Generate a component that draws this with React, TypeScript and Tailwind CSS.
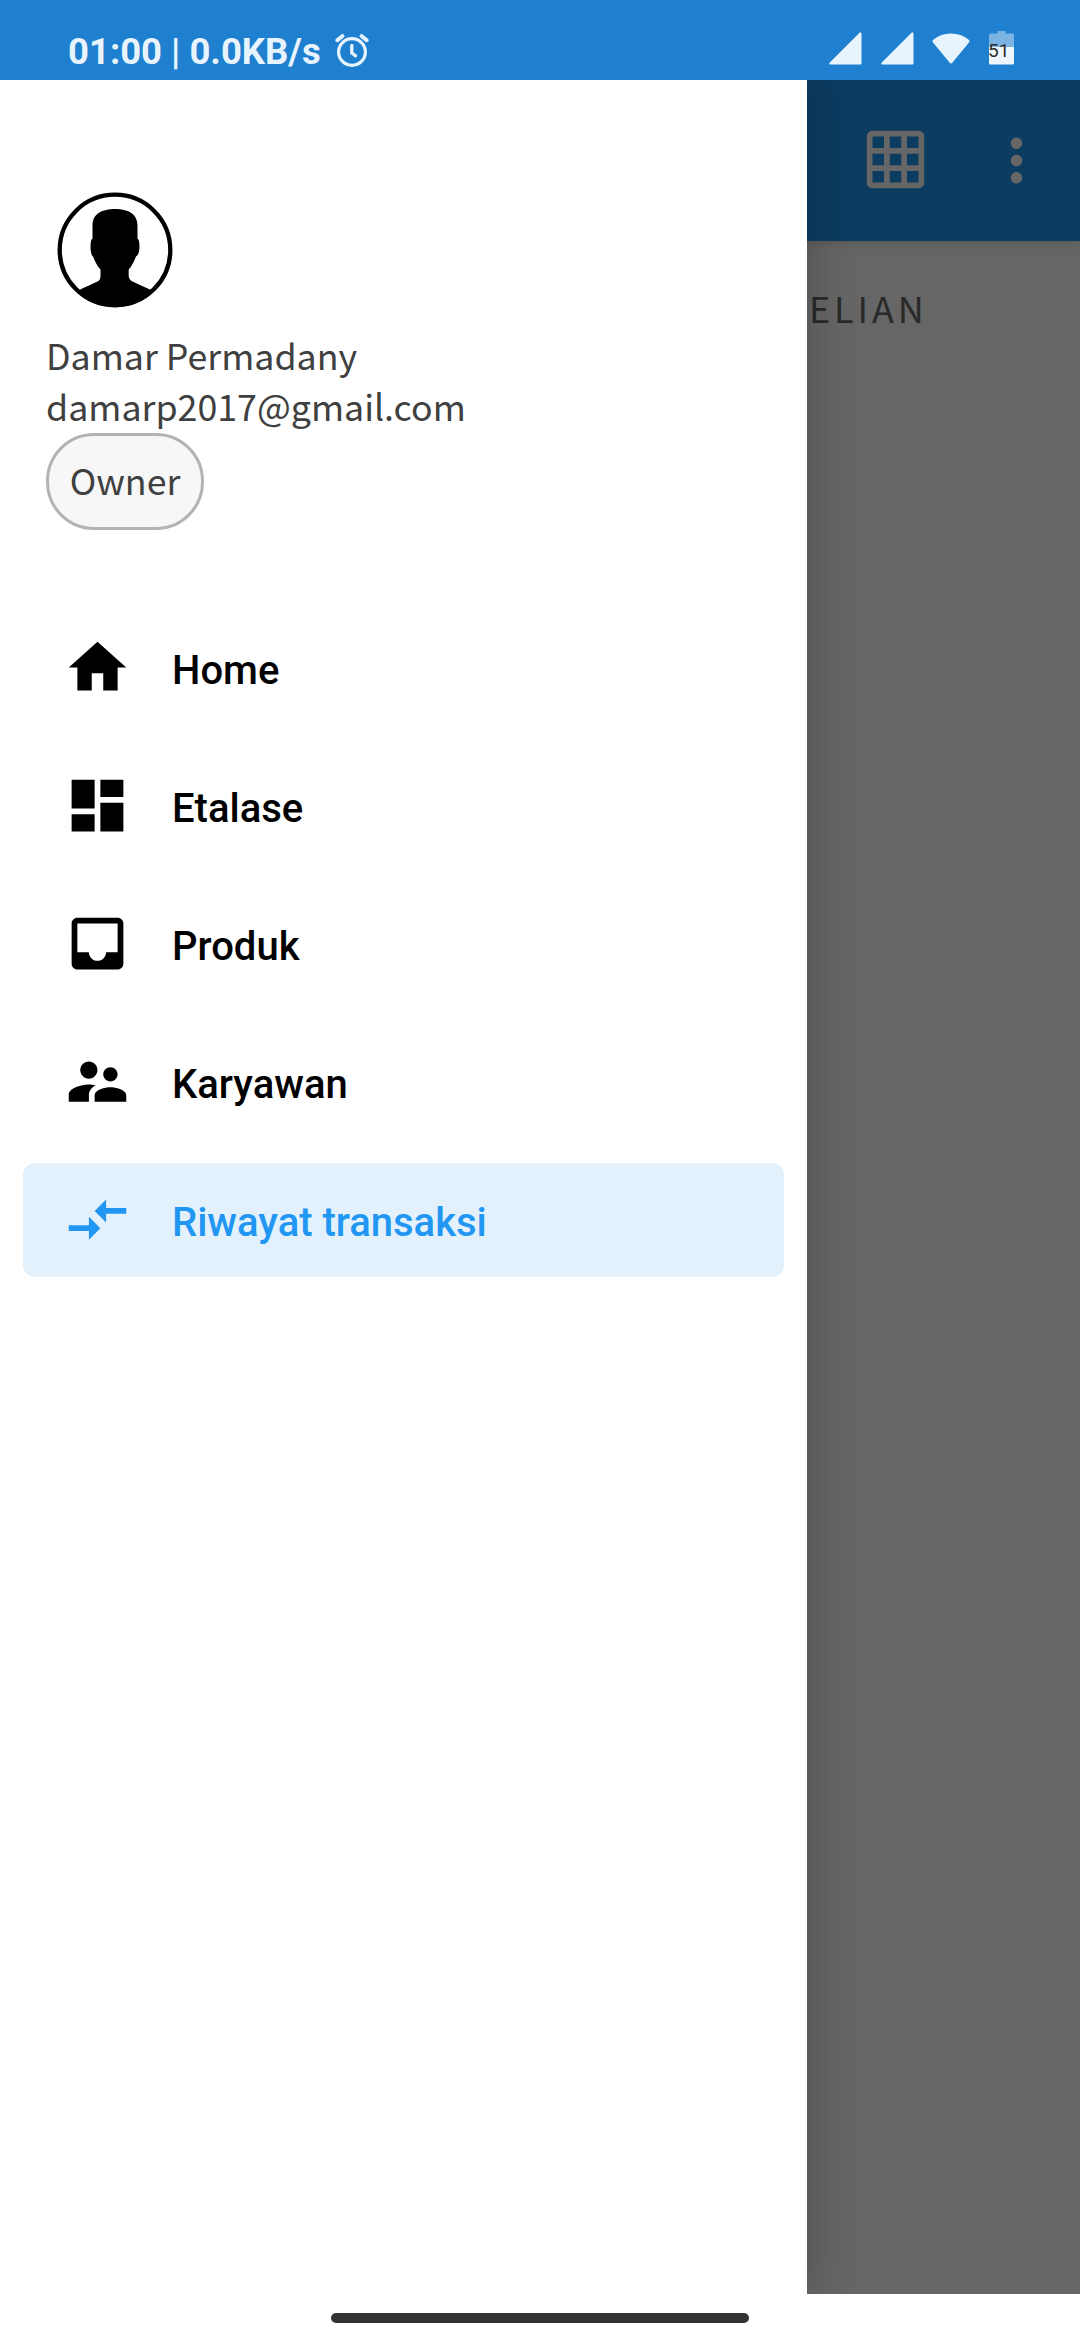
import type { ReactNode } from 'react';

type IconProps = { className?: string; children: ReactNode };

function Icon({ className = '', children }: IconProps) {
  return (
    <svg viewBox="0 0 24 24" fill="currentColor" className={`size-[69px] shrink-0 ${className}`}>
      {children}
    </svg>
  );
}

const menu = [
  { label: 'Home', icon: <path d="M10 20v-6h4v6h5v-8h3L12 3 2 12h3v8z" /> },
  { label: 'Etalase', icon: <path d="M3 13h8V3H3v10zm0 8h8v-6H3v6zm10 0h8V11h-8v10zm0-18v6h8V3h-8z" /> },
  {
    label: 'Produk',
    icon: (
      <path d="M19 3H4.99c-1.11 0-1.98.89-1.98 2L3 19c0 1.1.88 2 1.99 2H19c1.1 0 2-.9 2-2V5c0-1.11-.9-2-2-2zm0 12h-4c0 1.66-1.35 3-3 3s-3-1.34-3-3H4.99V5H19v10z" />
    ),
  },
  {
    label: 'Karyawan',
    icon: (
      <path d="M16.5 12c1.38 0 2.49-1.12 2.49-2.5S17.88 7 16.5 7 14 8.12 14 9.5s1.12 2.5 2.5 2.5zM9 11c1.66 0 2.99-1.34 2.99-3S10.66 5 9 5 6 6.34 6 8s1.34 3 3 3zm7.5 3c-1.83 0-5.5.92-5.5 2.75V19h11v-2.25c0-1.83-3.67-2.75-5.5-2.75zM9 13c-2.33 0-7 1.17-7 3.5V19h7v-2.25c0-.85.33-2.34 2.37-3.47C10.5 13.1 9.66 13 9 13z" />
    ),
  },
  {
    label: 'Riwayat transaksi',
    active: true,
    icon: <path d="M9.01 14H2v2h7.01v3L13 15l-3.99-4v3zm5.98-1v-3H22V8h-7.01V5L11 9l3.99 4z" />,
  },
];

function Signal() {
  return (
    <svg viewBox="0 0 33 33" fill="currentColor" className="h-[33px] w-[33px]">
      <path d="M30.8.4Q32.5 0 32.5 2V31.5Q32.5 32.5 31.5 32.5H1.5Q-.6 32.3.8 30.5Z" />
    </svg>
  );
}

function StatusBar() {
  return (
    <header className="flex h-20 items-start justify-between bg-[#1f80d0] pr-[66px] pl-[68px] text-[#e8f4fd]">
      <div className="flex items-start pt-[30px]">
        <span className="w-[254px] pt-px font-[Roboto,sans-serif] text-[36.5px] leading-[42px] font-bold whitespace-nowrap">
          01:00 | 0.0KB/s
        </span>
        <svg viewBox="0 0 34 34" fill="none" stroke="currentColor" className="mt-[3px] ml-[13px] size-[34px]">
          <circle cx="17" cy="19" r="13.4" strokeWidth="3.2" />
          <path d="M2.3 7.3 7.5 3M31.7 7.3 26.5 3" strokeWidth="3.8" strokeLinecap="round" />
          <path d="M16.8 12.5v7.5l3.8 2.8" strokeWidth="3.3" strokeLinecap="round" />
        </svg>
      </div>
      <div className="flex items-start pt-[32px]">
        <Signal />
        <div className="w-[19px]" />
        <Signal />
        <svg viewBox="0 0 38 32" fill="currentColor" className="mt-[1px] ml-[18px] h-[32px] w-[38px]">
          <path d="M1 9.5Q-.2 8 1.3 6.7 8.8.6 19 .6T36.7 6.7Q38.2 8 37 9.5L20.3 29.8Q19 31.2 17.7 29.8Z" />
        </svg>
        <div className="relative -mt-px ml-[19px] h-[34px] w-[25px]">
          <svg viewBox="0 0 25 34" className="h-full w-full">
            <path d="M8.5 0H16.5V2.5H23.5Q25 2.5 25 4V17H0V4Q0 2.5 1.5 2.5H8.5Z" fill="#7bb3e3" />
            <path d="M0 16H25V32Q25 33.5 23.5 33.5H1.5Q0 33.5 0 32Z" fill="#edf6fd" />
          </svg>
          <span className="absolute top-[9px] -left-px font-[Roboto,sans-serif] text-[19px] leading-[22px] text-[#2c2c2c]">
            51
          </span>
        </div>
      </div>
    </header>
  );
}

function Avatar() {
  return (
    <svg viewBox="0.5 0.5 115 115" className="size-[115px] overflow-visible">
      <defs>
        <clipPath id="avatar-circle">
          <circle cx="57.5" cy="57.5" r="57" />
        </clipPath>
      </defs>
      <circle cx="57.5" cy="57.5" r="55.3" fill="#fff" stroke="#000" strokeWidth="4.3" />
      <path
        clipPath="url(#avatar-circle)"
        d="M57.5 16.5C70 16.5 80 21 80 33V46Q82 47 82 54 82 62 78.5 64C76.5 69 74 74 71.2 77V84Q71.5 87 74 88.5C82 92.5 89 95 95 98.5V116H20V98.5C26 95 33 92.5 41 88.5Q43 87 43 84V77C40 74 37.5 69 35.5 64Q33 62 33 54 33 47 35 46V33C35 21 45 16.5 57.5 16.5Z"
      />
    </svg>
  );
}

function Drawer() {
  return (
    <aside className="relative z-10 flex w-[807px] flex-col bg-white pt-[113px] shadow-[0_0_46px_rgba(0,0,0,0.24)]">
      <div className="flex flex-col items-start pl-[46px] font-['Noto_Sans_CJK_JP',sans-serif] text-[35.75px] leading-[51px] text-[#404040]">
        <div className="pl-[12px]">
          <Avatar />
        </div>
        <p className="mt-[21px]">Damar Permadany</p>
        <p>damarp2017@gmail.com</p>
        <div className="mt-[2px] flex h-[97px] w-[158px] items-center justify-center rounded-[48px] border-[3px] border-[#b3b3b3] bg-[#f7f7f7] pb-[5px]">
          Owner
        </div>
      </div>
      <nav className="mt-[81px] flex flex-col gap-[24px] px-[23px]">
        {menu.map(({ label, icon, active }) => (
          <a
            key={label}
            className={`flex h-[114px] items-center gap-[40px] rounded-[12px] pl-[40px] font-[Roboto,sans-serif] text-[40px] font-medium ${
              active ? 'bg-[#e3f1fc] text-[#2196f3]' : 'text-black'
            }`}
          >
            <Icon className="-mt-[2px]">{icon}</Icon>
            <span className="mt-[6px]">{label}</span>
          </a>
        ))}
      </nav>
    </aside>
  );
}

function DimmedPage() {
  return (
    <main className="h-[2214px] flex-1 bg-[#666]">
      <div className="relative flex h-[161px] items-center bg-[#0d3c61] pb-[2px] pl-[54px] text-[#666] shadow-[0_2px_10px_rgba(0,0,0,0.15)]">
        <Icon>
          <path d="M20 2H4c-1.1 0-2 .9-2 2v16c0 1.1.9 2 2 2h16c1.1 0 2-.9 2-2V4c0-1.1-.9-2-2-2zM8 20H4v-4h4v4zm0-6H4v-4h4v4zm0-6H4V4h4v4zm6 12h-4v-4h4v4zm0-6h-4v-4h4v4zm0-6h-4V4h4v4zm6 12h-4v-4h4v4zm0-6h-4v-4h4v4zm0-6h-4V4h4v4z" />
        </Icon>
        <Icon className="mt-[2px] ml-[52px]">
          <path d="M12 8c1.1 0 2-.9 2-2s-.9-2-2-2-2 .9-2 2 .9 2 2 2zm0 2c-1.1 0-2 .9-2 2s.9 2 2 2 2-.9 2-2-.9-2-2-2zm0 6c-1.1 0-2 .9-2 2s.9 2 2 2 2-.9 2-2-.9-2-2-2z" />
        </Icon>
      </div>
      <div className="flex h-[132px] items-center pl-[2px] font-['Noto_Sans_CJK_JP',sans-serif] text-[36px] tracking-[3.9px] text-[#292929]">
        ELIAN
      </div>
    </main>
  );
}

export default function App() {
  return (
    <div className="relative flex h-[2340px] w-[1080px] flex-col overflow-hidden bg-white">
      <StatusBar />
      <div className="flex h-[2214px] overflow-hidden">
        <Drawer />
        <DimmedPage />
      </div>
      <footer className="flex flex-1 justify-center pt-[19px]">
        <div className="h-[10px] w-[418px] rounded-[5px] bg-[#333]" />
      </footer>
    </div>
  );
}
